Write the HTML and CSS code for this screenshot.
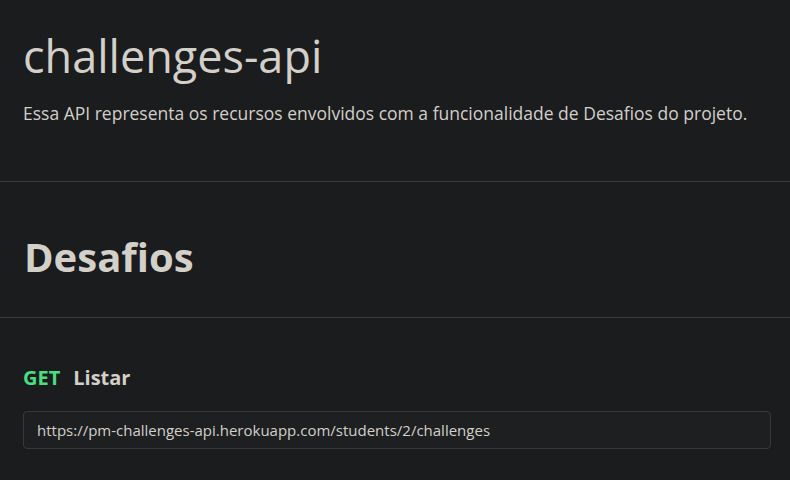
FILE: index.html
```html
<!DOCTYPE html>
<html lang="pt">
<head>
<meta charset="utf-8">
<link rel="stylesheet" href="styles.css">
</head>
<body>
<header class="intro">
  <h1 class="title">challenges-api</h1>
  <p class="desc">Essa API representa os recursos envolvidos com a funcionalidade de Desafios do projeto.</p>
</header>
<section class="group">
  <h2 class="group-title">Desafios</h2>
</section>
<section class="endpoint">
  <div class="ep-head"><span class="method">GET</span><span class="ep-name">Listar</span></div>
  <div class="url">https://pm-challenges-api.herokuapp.com/students/2/challenges</div>
</section>
</body>
</html>
```
FILE: styles.css
```css
html, body {
  margin: 0;
  padding: 0;
  background: #1b1c1e;
  color: #d3cfc9;
  font-family: "Open Sans", "Noto Sans", sans-serif;
  height: 100%;
  overflow: hidden;
}
.intro {
  padding: 26px 23px 55px;
  border-bottom: 1px solid #393a3d;
}
.title {
  margin: 0;
  font-size: 45px;
  font-weight: 400;
  line-height: 60px;
}
.desc {
  margin: 14px 0 0;
  font-size: 17.5px;
  line-height: 26px;
}
.group {
  box-sizing: border-box;
  padding: 14px 24px 0;
  height: 136px;
  display: flex;
  align-items: center;
  border-bottom: 1px solid #393a3d;
}
.group-title {
  margin: 0;
  font-size: 40px;
  font-weight: 700;
}
.endpoint {
  padding: 45px 19px 0 23px;
}
.ep-head {
  display: flex;
  gap: 13px;
  font-size: 20px;
  font-weight: 700;
  line-height: 30px;
}
.method { color: #4ade80; }
.url {
  margin-top: 18px;
  border: 1px solid #38393c;
  border-radius: 4px;
  background: #1e1f21;
  padding: 0 13px;
  height: 36px;
  line-height: 36px;
  font-size: 15px;
}
```
